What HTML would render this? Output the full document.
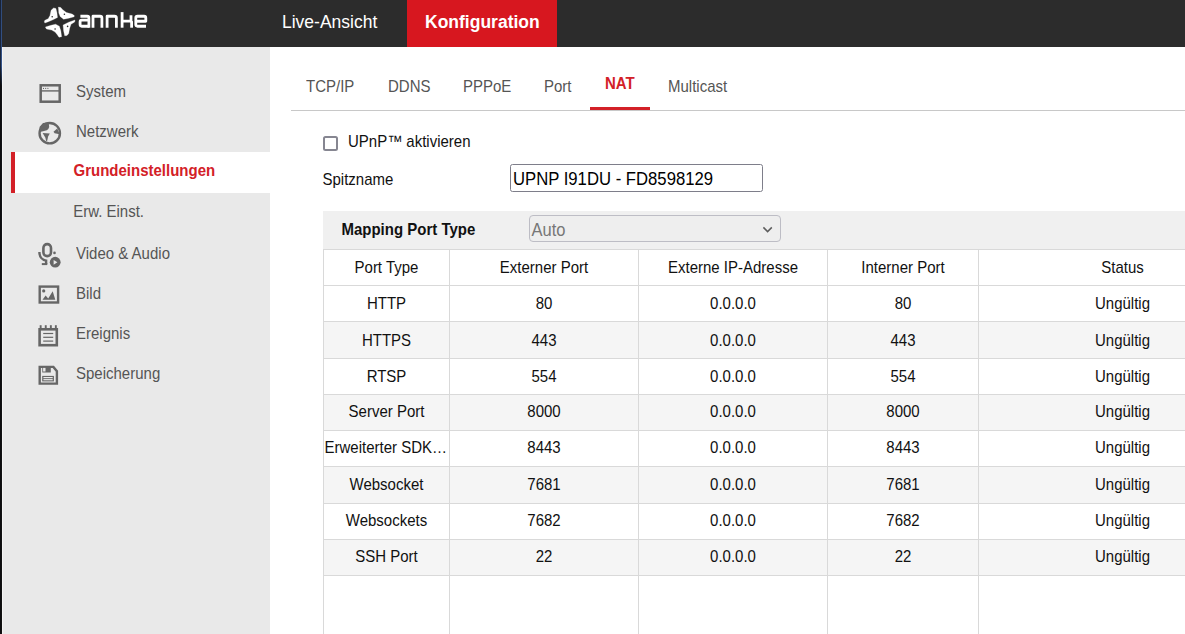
<!DOCTYPE html>
<html><head><meta charset="utf-8">
<style>
*{margin:0;padding:0;box-sizing:border-box}
html,body{width:1185px;height:634px;overflow:hidden;background:#fff;font-family:"Liberation Sans",sans-serif;position:relative}
.abs{position:absolute;white-space:nowrap}
#edge{position:absolute;left:0;top:0;width:1px;height:634px;background:linear-gradient(#182236 0,#1a2740 62px,#0d0d0f 85px,#0d0d0f 100%)}
#edge2{position:absolute;left:1px;top:0;width:1px;height:634px;background:linear-gradient(#2f4a78 0,#35548a 66px,#121316 86px,#121212 100%)}
#hdr{position:absolute;left:2px;top:0;width:1183px;height:47px;background:#2c2c2c}
#konf{position:absolute;left:407px;top:0;width:150px;height:47px;background:#d7171f}
.hnav{position:absolute;top:-1px;height:46px;line-height:46px;font-size:17.5px;color:#fff;transform:scaleY(1.08);transform-origin:0 29px}
#side{position:absolute;left:2px;top:47px;width:268px;height:587px;background:#e9e9e9}
.si{position:absolute;font-size:15px;color:#555;white-space:nowrap;transform:scaleY(1.08);transform-origin:0 14px}
#act{position:absolute;left:15px;top:152px;width:255px;height:41px;background:#fff}
#actbar{position:absolute;left:11px;top:152px;width:4px;height:41px;background:#d32027}
.tab{position:absolute;font-size:15px;color:#555;white-space:nowrap;transform:scaleY(1.08);transform-origin:0 14px}
#tabline{position:absolute;left:291px;top:110px;width:898px;height:1px;background:#c8c8c8}
#tabred{position:absolute;left:590px;top:107px;width:60px;height:3px;background:#d32027}
.lbl{position:absolute;font-size:15px;color:#111;white-space:nowrap;transform:scaleY(1.08);transform-origin:0 14px}
#band{position:absolute;left:323px;top:211px;width:862px;height:38px;background:#f0f0f0}
.hl{position:absolute;height:1px;background:#d9d9d9}
.vl{position:absolute;width:1px;background:#d9d9d9}
.row{position:absolute;left:323px;width:862px;background:#f5f5f5}
.c{position:absolute;font-size:15px;color:#111;text-align:center;white-space:nowrap;transform:scaleY(1.08);transform-origin:0 14px}
</style></head><body>
<div id="edge"></div><div id="edge2"></div>
<div id="hdr"></div>
<div id="konf"></div>
<!-- logo -->
<svg class="abs" style="left:42px;top:4px" width="110" height="36" viewBox="0 0 110 36">
  <g fill="#fff" stroke="#fff" stroke-width="0.3" stroke-linejoin="round">
    <path d="M11.6 3.9 L13.9 4.5 L14.9 8.5 L15.5 13.4 L11.4 15.6 L5.7 17.9 L2.8 19.0 L2.3 17.0 L3.4 15.9 L6.2 14.8 L8.0 11.4 L9.1 6.2 Z"/>
    <path d="M16.4 3.1 L18.8 3.5 L20.7 5.7 L24.4 8.5 L30.1 10.1 L32.3 11.6 L32.1 12.8 L26.7 14.2 L21.6 15.2 L18.2 12.5 L16.8 9.1 Z"/>
    <path d="M3.4 23.0 L9.1 21.3 L13.6 20.2 L17.3 22.2 L18.8 26.7 L19.6 32.7 L17.0 33.2 L15.3 30.7 L13.1 28.1 L9.7 26.1 L4.5 25.0 Z"/>
    <path d="M21.1 21.1 L26.7 18.2 L33.0 16.0 L32.7 17.9 L29.0 20.2 L27.6 24.4 L26.7 29.5 L25.0 31.5 L22.7 31.7 L21.6 26.7 Z"/>
  </g>
  <g fill="#2c2c2c">
    <circle cx="10.2" cy="12.8" r="0.8"/><circle cx="22.4" cy="10.2" r="0.8"/><circle cx="13.1" cy="25" r="0.8"/><circle cx="25.6" cy="22.4" r="0.8"/>
  </g>
  <g transform="translate(34 4.6)" fill="none" stroke="#fff" stroke-width="2.8" stroke-linejoin="round">
    <path d="M4.4 7.65 H11.3 Q12.9 7.65 12.9 9.3 V19.1"/>
    <path d="M12.9 17.65 H5.7 Q4.1 17.65 4.1 16 V13.2 Q4.1 11.6 5.7 11.6 H12.9"/>
    <path d="M17 19.1 V7.65 H24 Q25.9 7.65 25.9 9.5 V19.1"/>
    <path d="M31.1 19.1 V7.65 H38.5 Q40.4 7.65 40.4 9.5 V19.1"/>
    <path d="M46.1 3.5 V19.1"/>
    <path d="M46.1 12.5 H55 V6.6"/>
    <path d="M55.6 12.5 V19.1"/>
    <path d="M70 17.65 H61.5 Q59.8 17.65 59.8 16 V9.3 Q59.8 7.65 61.5 7.65 H68.1 Q69.8 7.65 69.8 9.3 V12.65 H59.8"/>
  </g>
</svg>
<div class="hnav" style="left:282px">Live-Ansicht</div>
<div class="hnav" style="left:425px;font-weight:bold">Konfiguration</div>

<div id="side"></div>
<div class="abs" style="left:2px;top:47px;width:1px;height:587px;background:#f4f4f4"></div>
<div id="act"></div>
<div id="actbar"></div>
<svg class="abs" style="left:0;top:0" width="270" height="634" viewBox="0 0 270 634">
 <g fill="none" stroke="#666" >
  <!-- System -->
  <rect x="40.7" y="85.3" width="19" height="16.4" stroke-width="2.5"/>
  <line x1="41" y1="90.9" x2="59" y2="90.9" stroke-width="1.4"/>
  <!-- Globe -->
  <circle cx="49.75" cy="133.2" r="10.2" stroke-width="2.4"/>
  <!-- mic -->
  <rect x="43.4" y="244.1" width="7.6" height="12" rx="3.8" stroke-width="2.6"/>
  <path d="M39.4 251.9 C39.4 257.2 42.5 260.2 46.1 260.6 V264" stroke-width="2.4"/>
  <line x1="41.8" y1="264.1" x2="47.3" y2="264.1" stroke-width="2"/>
  <!-- Bild -->
  <rect x="39.7" y="286.6" width="18.4" height="15.9" stroke-width="2.4"/>
  <!-- Ereignis -->
  <rect x="39.6" y="329.3" width="17.2" height="15.9" stroke-width="2.6"/>
  <line x1="43.2" y1="333.5" x2="53.2" y2="333.5" stroke-width="1.2"/>
  <line x1="43.2" y1="337.3" x2="53.2" y2="337.3" stroke-width="1.2"/>
  <line x1="43.2" y1="341.1" x2="53.2" y2="341.1" stroke-width="1.2"/>
  <!-- floppy -->
  <path d="M39.7 366.9 H53.4 L56.9 371.2 V383.6 H39.7 Z" stroke-width="2.4" stroke-linejoin="miter"/>
  
 </g>
 <g fill="#666">
  <circle cx="43.5" cy="88.4" r="0.55"/><circle cx="45.7" cy="88.4" r="0.55"/><circle cx="47.9" cy="88.4" r="0.55"/>
  <path d="M48.6 122.5 L49.2 126.9 L48.3 129.1 L46.8 130.3 L44 131.1 L40 132 L39.5 127 L43 123 Z"/>
  <path d="M42.6 133.1 L49.8 133.5 L48.1 136.6 L47.3 140.6 L46.3 141.4 L45.3 137.6 Z"/>
  <path d="M57.2 128.5 L53.5 131.7 L54.6 133.3 L59.7 134.3 Z"/>
  <circle cx="54.5" cy="252.9" r="1.3"/>
  <circle cx="55.2" cy="262.2" r="5.4"/>
  <circle cx="43.7" cy="290.9" r="1.6"/>
  <path d="M42.5 299.8 L45.6 295.6 L48.2 298.5 L52.7 291.2 L55.3 299.8 Z"/>
  <rect x="39.7" y="325.2" width="1.9" height="4"/><rect x="44.8" y="325.2" width="1.9" height="4"/><rect x="49.9" y="325.2" width="1.9" height="4"/><rect x="54.9" y="325.2" width="1.9" height="4"/>
  <rect x="42.3" y="366.6" width="8.5" height="5.9"/>
  <rect x="42.2" y="375.9" width="11.7" height="5.5"/>
 </g>
 <g fill="#e9e9e9">
  <path d="M53.6 259.9 L53.6 264.7 L57.4 262.3 Z"/>
  <rect x="43.1" y="367.9" width="2.4" height="3.6"/>
  <rect x="43.4" y="377" width="9.3" height="1.2"/><rect x="43.4" y="379.1" width="9.3" height="1.2"/>
 </g>
</svg>
<div class="si" style="left:76px;top:83px">System</div>
<div class="si" style="left:76px;top:123px">Netzwerk</div>
<div class="si" style="left:73.5px;top:162px;color:#d32027;font-weight:bold">Grundeinstellungen</div>
<div class="si" style="left:73.2px;top:203px">Erw. Einst.</div>
<div class="si" style="left:76px;top:245px">Video &amp; Audio</div>
<div class="si" style="left:76px;top:285px">Bild</div>
<div class="si" style="left:76px;top:325px">Ereignis</div>
<div class="si" style="left:76px;top:365px">Speicherung</div>

<div class="tab" style="left:306px;top:78px">TCP/IP</div>
<div class="tab" style="left:388px;top:78px">DDNS</div>
<div class="tab" style="left:463px;top:78px">PPPoE</div>
<div class="tab" style="left:544px;top:78px">Port</div>
<div class="tab" style="left:605px;top:75px;color:#d32027;font-weight:bold">NAT</div>
<div class="tab" style="left:668px;top:78px">Multicast</div>
<div id="tabline"></div>
<div id="tabred"></div>

<div class="abs" style="left:323px;top:136px;width:15px;height:15px;border:2px solid #868691;border-radius:2.5px"></div>
<div class="lbl" style="left:348px;top:133px">UPnP™ aktivieren</div>
<div class="lbl" style="left:322.5px;top:171px">Spitzname</div>
<div class="abs" style="left:510px;top:164px;width:253px;height:28px;border:1px solid #7e7e8a;border-radius:2.5px"></div>
<div class="lbl" style="left:513px;top:170px;font-size:16.7px;color:#000;transform-origin:0 15px">UPNP I91DU - FD8598129</div>

<div id="band"></div>
<div class="lbl" style="left:341.4px;top:221px;font-weight:bold;color:#111">Mapping Port Type</div>
<div class="abs" style="left:529px;top:215px;width:252px;height:27px;border:1px solid #bdbdc5;border-radius:4px;background:#eeeeee"></div>
<div class="lbl" style="left:531.5px;top:221px;color:#777;font-size:16.5px">Auto</div>
<svg class="abs" style="left:760px;top:224px" width="16" height="10" viewBox="760 224 16 10"><polyline points="763.4,227.4 767.6,231.6 771.8,227.4" fill="none" stroke="#5c5c5c" stroke-width="1.5"/></svg>

<div id="tbl">
<div class="row" style="top:321px;height:37px"></div>
<div class="row" style="top:394px;height:36px"></div>
<div class="row" style="top:466px;height:37px"></div>
<div class="row" style="top:539px;height:36px"></div>
<div class="hl" style="left:323px;top:249px;width:862px"></div>
<div class="hl" style="left:323px;top:285px;width:862px"></div>
<div class="hl" style="left:323px;top:321px;width:862px"></div>
<div class="hl" style="left:323px;top:358px;width:862px"></div>
<div class="hl" style="left:323px;top:394px;width:862px"></div>
<div class="hl" style="left:323px;top:430px;width:862px"></div>
<div class="hl" style="left:323px;top:466px;width:862px"></div>
<div class="hl" style="left:323px;top:503px;width:862px"></div>
<div class="hl" style="left:323px;top:539px;width:862px"></div>
<div class="hl" style="left:323px;top:575px;width:862px"></div>
<div class="vl" style="left:323px;top:249px;height:385px"></div>
<div class="vl" style="left:449px;top:249px;height:385px"></div>
<div class="vl" style="left:638px;top:249px;height:385px"></div>
<div class="vl" style="left:827px;top:249px;height:385px"></div>
<div class="vl" style="left:978px;top:249px;height:385px"></div>
<div class="c" style="left:286.5px;width:200px;top:259.0px;line-height:18px">Port Type</div>
<div class="c" style="left:444.0px;width:200px;top:259.0px;line-height:18px">Externer Port</div>
<div class="c" style="left:633.0px;width:200px;top:259.0px;line-height:18px">Externe IP-Adresse</div>
<div class="c" style="left:803.0px;width:200px;top:259.0px;line-height:18px">Interner Port</div>
<div class="c" style="left:1022.5px;width:200px;top:259.0px;line-height:18px">Status</div>
<div class="c" style="left:286.5px;width:200px;top:295.0px;line-height:18px">HTTP</div>
<div class="c" style="left:444.0px;width:200px;top:295.0px;line-height:18px">80</div>
<div class="c" style="left:633.0px;width:200px;top:295.0px;line-height:18px">0.0.0.0</div>
<div class="c" style="left:803.0px;width:200px;top:295.0px;line-height:18px">80</div>
<div class="c" style="left:1022.5px;width:200px;top:295.0px;line-height:18px">Ungültig</div>
<div class="c" style="left:286.5px;width:200px;top:331.5px;line-height:18px">HTTPS</div>
<div class="c" style="left:444.0px;width:200px;top:331.5px;line-height:18px">443</div>
<div class="c" style="left:633.0px;width:200px;top:331.5px;line-height:18px">0.0.0.0</div>
<div class="c" style="left:803.0px;width:200px;top:331.5px;line-height:18px">443</div>
<div class="c" style="left:1022.5px;width:200px;top:331.5px;line-height:18px">Ungültig</div>
<div class="c" style="left:286.5px;width:200px;top:368.0px;line-height:18px">RTSP</div>
<div class="c" style="left:444.0px;width:200px;top:368.0px;line-height:18px">554</div>
<div class="c" style="left:633.0px;width:200px;top:368.0px;line-height:18px">0.0.0.0</div>
<div class="c" style="left:803.0px;width:200px;top:368.0px;line-height:18px">554</div>
<div class="c" style="left:1022.5px;width:200px;top:368.0px;line-height:18px">Ungültig</div>
<div class="c" style="left:286.5px;width:200px;top:403.0px;line-height:18px">Server Port</div>
<div class="c" style="left:444.0px;width:200px;top:403.0px;line-height:18px">8000</div>
<div class="c" style="left:633.0px;width:200px;top:403.0px;line-height:18px">0.0.0.0</div>
<div class="c" style="left:803.0px;width:200px;top:403.0px;line-height:18px">8000</div>
<div class="c" style="left:1022.5px;width:200px;top:403.0px;line-height:18px">Ungültig</div>
<div class="c" style="left:324.5px;text-align:left;top:439.0px;line-height:18px">Erweiterter SDK…</div>
<div class="c" style="left:444.0px;width:200px;top:439.0px;line-height:18px">8443</div>
<div class="c" style="left:633.0px;width:200px;top:439.0px;line-height:18px">0.0.0.0</div>
<div class="c" style="left:803.0px;width:200px;top:439.0px;line-height:18px">8443</div>
<div class="c" style="left:1022.5px;width:200px;top:439.0px;line-height:18px">Ungültig</div>
<div class="c" style="left:286.5px;width:200px;top:475.5px;line-height:18px">Websocket</div>
<div class="c" style="left:444.0px;width:200px;top:475.5px;line-height:18px">7681</div>
<div class="c" style="left:633.0px;width:200px;top:475.5px;line-height:18px">0.0.0.0</div>
<div class="c" style="left:803.0px;width:200px;top:475.5px;line-height:18px">7681</div>
<div class="c" style="left:1022.5px;width:200px;top:475.5px;line-height:18px">Ungültig</div>
<div class="c" style="left:286.5px;width:200px;top:512.0px;line-height:18px">Websockets</div>
<div class="c" style="left:444.0px;width:200px;top:512.0px;line-height:18px">7682</div>
<div class="c" style="left:633.0px;width:200px;top:512.0px;line-height:18px">0.0.0.0</div>
<div class="c" style="left:803.0px;width:200px;top:512.0px;line-height:18px">7682</div>
<div class="c" style="left:1022.5px;width:200px;top:512.0px;line-height:18px">Ungültig</div>
<div class="c" style="left:286.5px;width:200px;top:548.0px;line-height:18px">SSH Port</div>
<div class="c" style="left:444.0px;width:200px;top:548.0px;line-height:18px">22</div>
<div class="c" style="left:633.0px;width:200px;top:548.0px;line-height:18px">0.0.0.0</div>
<div class="c" style="left:803.0px;width:200px;top:548.0px;line-height:18px">22</div>
<div class="c" style="left:1022.5px;width:200px;top:548.0px;line-height:18px">Ungültig</div>
</div><!--/tbl-->
</body></html>
